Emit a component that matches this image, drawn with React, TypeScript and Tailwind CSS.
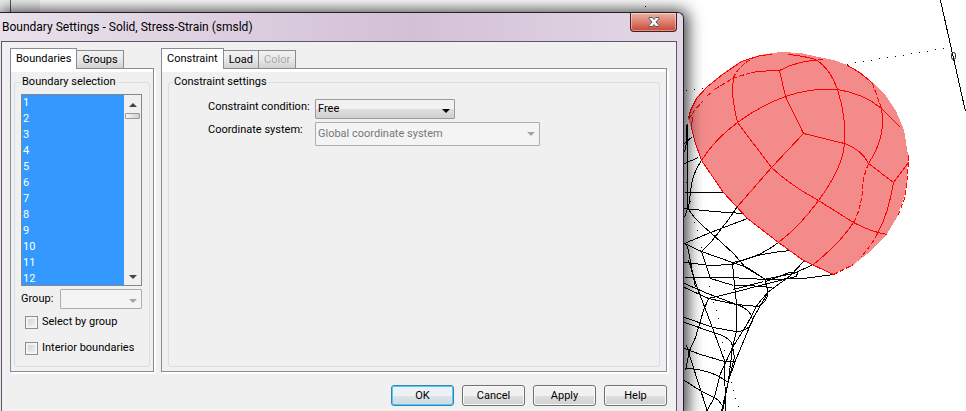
import type { ReactNode } from "react";

const dome =
  "M688 118 L690 110 L696 98 L706 87 L722 74 L741 61 L760 55 L780 52 L801 53 L818 57 L834 60 L847 65 L860 72 L872 82 L886 96 L896 111 L904 130 L908 155 L907 180 L904 198 L897 217 L887 234 L872 250 L853 265 L833 274 L803 260 L778 242 L747 218 L723 192 L701 160 L694 140 L691 127 Z";

const redLines = [
  "M688 118 L690 110 L696 98 L706 87 L722 74 L741 61 L760 55 L772 54",
  "M692 117 L691 127 L694 140 L701 160 L723 192 L747 218 L778 242 L803 260 L833 274",
  "M737 122 L771 167 Q790 185 818 200 L853 222 Q872 232 887 234",
  "M733 77 Q730 95 737 122",
  "M751 72 Q765 70 779 70 Q797 60 823 59",
  "M779 70 L785 96 L803 133 L771 167 L737 206",
  "M803 133 L844 143 Q861 149 868 163 L893 182 L908 162",
  "M701 160 Q714 139 737 122 Q760 105 785 96 Q811 87 837 89 Q863 93 881 108 L900 127",
  "M788 54 Q806 56 815 59 Q829 67 837 89 Q846 117 844 143 Q842 168 818 200 Q801 224 778 242",
  "M881 108 Q886 136 868 163",
  "M853 222 Q840 242 813 264",
  "M893 182 Q888 213 877 233",
  "M847 65 Q861 72 872 83",
];

const redDashes = [
  "M688 119 L694 110 L702 101 M707 95 L711 92 M714 89 L732 78 L751 72",
  "M750 59 Q738 66 733 77",
  "M872 83 L881 108",
  "M868 163 Q861 181 862 190 Q860 210 853 222",
  "M877 233 Q871 245 860 257 M833 274 L853 264",
  "M908 155 L907 180 L904 198 L897 217",
];

const mesh = [
  "M701 160 Q691 174 690 192 L688 208",
  "M687 123 L687 208 L684 217 M686 124 L686 142 L684 152",
  "M684 143 L692 136 M684 163 L698 157",
  "M684 192 H723",
  "M684 208 L713 211 L743 213",
  "M688 208 Q691 216 710 232 L733 253 L745 267 L765 279",
  "M747 218 L710 232 L684 243",
  "M737 206 L728 219 L711 241 L701 251",
  "M684 243 L701 251 L732 262 L747 267 L765 279",
  "M684 262 L710 265 L732 264 Q754 253 790 250",
  "M732 262 Q757 258 778 242",
  "M684 277 H730 L765 279 L803 278 L833 274",
  "M701 251 L705 263 L710 278 L733 285",
  "M732 263 L734 285 L736 303 V331 L732 346",
  "M803 261 L790 275 L767 292 L757 304 L747 323 L732 347 L720 373 L714 397 L706 411",
  "M813 264 L793 273 L763 279 M765 281 L789 272 L797 272 L796 276 L763 284 L733 292 L708 298",
  "M734 285 H748 L772 287",
  "M684 283 L707 293 L736 304 Q751 309 752 320 Q749 331 735 331 L713 327 L684 317",
  "M684 287 L708 298 L736 304 L758 306 Q769 299 767 290 L765 280",
  "M708 298 L703 310 L695 337 L689 350 L685 370",
  "M684 322 L713 332 Q731 337 732 346 L734 357 L728 380 L721 411",
  "M688 260 L697 288 L710 322 L724 360 L725 411",
  "M684 243 L687 246 L695 287",
  "M684 348 L700 354 L724 361 H734",
  "M684 368 Q709 368 728 382",
  "M684 380 L698 389 L717 399 L722 405",
  "M686 345 L697 380 L707 411",
  "M767 293 L753 317 L735 360 L728 380 L722 411",
  "M732 347 L728 380",
  "M733 289 L763 281",
];

const dots: [number, number][] = [
  [645, 6], [686, 90], [694, 89], [702, 88], [847, 64], [855, 62], [863, 61], [871, 60], [879, 58],
  [887, 57], [895, 56], [903, 55], [911, 53], [919, 52], [927, 51], [935, 49], [943, 48],
  [686, 182], [690, 201], [694, 222], [697, 230], [701, 247], [709, 286], [713, 302], [716, 310], [718, 318],
  [722, 342], [724, 350], [729, 366], [731, 382], [733, 390], [735, 398], [738, 406],
];

function Drawing() {
  return (
    <svg
      className="absolute left-0 top-0"
      width="966"
      height="411"
      viewBox="0 0 966 411"
      fill="none"
      shapeRendering="crispEdges"
      aria-hidden="true"
    >
      <rect width="40" height="14" fill="#f0f0f0" />
      <path d="M10.5 0V12" stroke="#555" />
      <path d={dome} fill="#f38b8b" />
      <g stroke="#000" transform="translate(.5 .5)">
        {mesh.map((d) => <path key={d} d={d} />)}
        <path d="M940 0 L965 111" />
      </g>
      <g stroke="#f00" transform="translate(.5 .5)">
        {redLines.map((d) => <path key={d} d={d} />)}
        {redDashes.map((d) => <path key={d} d={d} strokeDasharray="5 2" />)}
      </g>
      {dots.map(([x, y]) => <rect key={`${x}-${y}`} x={x} y={y} width="1" height="1" fill="#000" />)}
      <rect x="951.5" y="52.5" width="4" height="7" rx="2" stroke="#222" shapeRendering="auto" />
    </svg>
  );
}

function Tab({ children, active, disabled }: { children: ReactNode; active?: boolean; disabled?: boolean }) {
  return (
    <button
      type="button"
      role="tab"
      aria-selected={!!active}
      disabled={disabled}
      className={
        active
          ? "relative z-10 -mb-px h-[21px] border border-b-0 border-[#898c95] bg-white px-[5px]"
          : "-ml-px h-[18px] border border-b-0 border-[#898c95] bg-linear-to-b from-[#f2f2f2] via-[#e8e8e8] to-[#d2d2d2] px-[5px] disabled:text-[#a8a8a8]"
      }
    >
      {children}
    </button>
  );
}

function Panel({ children }: { children: ReactNode }) {
  return (
    <div className="flex flex-1 flex-col border border-[#898c95] px-[3px] pb-1 pt-[5px] shadow-[inset_0_3px_0_#fff,2px_2px_0_#fff]">
      {children}
    </div>
  );
}

function Arrow({ className }: { className: string }) {
  return (
    <svg className={className} width="8" height="4" viewBox="0 0 8 4" fill="currentColor" aria-hidden="true">
      <path d="M0 0H8L4 4Z" />
    </svg>
  );
}

function PushButton({ children, primary }: { children: ReactNode; primary?: boolean }) {
  return (
    <button
      type="button"
      className={
        primary
          ? "h-[21px] w-[63px] rounded-[3px] border border-[#3c7fb1] bg-linear-to-b from-[#edf1f3] from-50% via-[#dce4e8] via-50% to-[#cbdbe2] shadow-[inset_0_0_0_1px_#45d0f5]"
          : "h-[21px] w-[63px] rounded-[3px] border border-[#707070] bg-linear-to-b from-[#f1f1f1] from-50% via-[#dfdfdf] via-50% to-[#d0d0d0] shadow-[inset_0_0_0_1px_#fafafa]"
      }
    >
      {children}
    </button>
  );
}

function Check({ id, label }: { id: string; label: string }) {
  return (
    <div className="flex items-center gap-1">
      <input
        id={id}
        type="checkbox"
        className="size-[13px] appearance-none border border-[#8e8f8f] bg-linear-to-br from-[#cbcfd5] to-[#f6f6f6] shadow-[inset_0_0_0_2px_#f4f4f4]"
      />
      <label htmlFor={id}>{label}</label>
    </div>
  );
}

const boundaries = Array.from({ length: 14 }, (_, i) => String(i + 1));

export default function App() {
  return (
    <main className="relative min-h-screen overflow-hidden bg-white pt-3 font-['Roboto','DejaVu_Sans',sans-serif] text-[11px] leading-4 text-black">
      <Drawing />
      <section
        role="dialog"
        aria-labelledby="title"
        className="relative flex min-h-[calc(100vh-12px)] w-[684px] flex-col rounded-tr-md border-r border-t border-[#222] bg-linear-to-r from-[#e9e1eb] via-[#d3c0d6] via-60% to-[#e4d8e6] pl-px pr-1.5 shadow-[2px_0_16px_2px_rgba(0,0,0,0.75)]"
      >
        <header className="flex h-7 items-start justify-between">
          <h1 id="title" className="pl-px pt-1.5 text-[12px] leading-4">
            Boundary Settings - Solid, Stress-Strain (smsld)
          </h1>
          <button
            type="button"
            aria-label="Close"
            className="flex h-[19px] w-[47px] items-center justify-center rounded-b-[4px] border border-t-0 border-[#4d1c20] bg-linear-to-b from-[#eeb0a5] from-0% via-[#dd8475] via-45% to-[#c8452f] shadow-[inset_0_0_0_1px_rgba(255,255,255,0.4)]"
          >
            <svg width="12" height="10" viewBox="0 0 12 10" aria-hidden="true">
              <path
                d="M1 .5H4.3L6 2.5 7.7.5H11V1.5L8 5 11 8.5V9.5H7.7L6 7.5 4.3 9.5H1V8.5L4 5 1 1.5Z"
                fill="#fff"
                stroke="#53586b"
              />
            </svg>
          </button>
        </header>

        <div className="flex flex-1 flex-col border border-b-0 border-[#5f5566] bg-[#f0f0f0] pl-2 pr-[9px] pt-1.5">
          <div className="flex h-[324px] gap-[7px]">
            <div className="flex w-36 shrink-0 flex-col">
              <div role="tablist" className="flex items-end">
                <Tab active>Boundaries</Tab>
                <Tab>Groups</Tab>
              </div>
              <Panel>
                <fieldset className="flex-1 rounded-[3px] border border-[#d5dfe5] pl-1.5 pr-[7px]">
                  <legend className="px-px">Boundary selection</legend>
                  <div className="mt-1 flex h-[192px] border border-[#828790]">
                    <select
                      multiple
                      aria-label="Boundary selection"
                      defaultValue={boundaries}
                      className="min-w-0 flex-1 appearance-none overflow-hidden bg-[#3399ff] pt-px [scrollbar-width:none]"
                    >
                      {boundaries.map((n) => (
                        <option
                          key={n}
                          value={n}
                          className="h-4 min-h-0 bg-[linear-gradient(#3399ff,#3399ff)] p-0 px-px leading-4 text-white [-webkit-text-fill-color:white]"
                        >
                          {n}
                        </option>
                      ))}
                    </select>
                    <div className="flex w-[17px] flex-col items-center bg-[#f0f0f0] pb-1.5 pt-2">
                      <Arrow className="rotate-180 text-[#444]" />
                      <div className="mt-1.5 h-1.5 w-[15px] rounded-[1px] border border-[#979797] bg-linear-to-r from-[#f5f5f5] to-[#cfcfcf]" />
                      <Arrow className="mt-auto text-[#444]" />
                    </div>
                  </div>
                  <div className="mt-[3px] flex items-center justify-between">
                    <label htmlFor="group">Group:</label>
                    <div className="relative">
                      <select
                        id="group"
                        disabled
                        className="block h-5 w-[82px] appearance-none rounded-[1px] border border-[#adadad] bg-[#f4f4f4]"
                      />
                      <Arrow className="absolute right-[5px] top-2.5 text-[#a5a5a5]" />
                    </div>
                  </div>
                  <div className="mt-[5px] flex flex-col gap-2.5 pl-1">
                    <Check id="by-group" label="Select by group" />
                    <Check id="interior" label="Interior boundaries" />
                  </div>
                </fieldset>
              </Panel>
            </div>

            <div className="flex min-w-0 flex-1 flex-col">
              <div role="tablist" className="flex items-end">
                <Tab active>Constraint</Tab>
                <Tab>Load</Tab>
                <Tab disabled>Color</Tab>
              </div>
              <Panel>
                <fieldset className="mx-[3px] flex-1 rounded-[3px] border border-[#d5dfe5] px-1">
                  <legend className="px-px">Constraint settings</legend>
                  <div className="grid grid-cols-[107px_1fr] gap-y-[3px] pl-[35px] pt-[9px]">
                    <label htmlFor="condition">Constraint condition:</label>
                    <div className="relative w-[140px]">
                      <select
                        id="condition"
                        className="block h-5 w-full appearance-none rounded-[1px] border border-[#9a9a9a] bg-linear-to-b from-[#f1f1f1] from-50% via-[#dfdfdf] via-50% to-[#d0d0d0] pl-0.5"
                      >
                        <option>Free</option>
                      </select>
                      <Arrow className="pointer-events-none absolute right-[5px] top-2.5" />
                    </div>
                    <label htmlFor="system">Coordinate system:</label>
                    <div className="relative w-[225px]">
                      <select
                        id="system"
                        disabled
                        className="block h-6 w-full appearance-none rounded-[1px] border border-[#adadad] bg-[#f4f4f4] pl-0.5 text-[#777] opacity-100"
                      >
                        <option>Global coordinate system</option>
                      </select>
                      <Arrow className="absolute right-[5px] top-2.5 text-[#a5a5a5]" />
                    </div>
                  </div>
                </fieldset>
              </Panel>
            </div>
          </div>

          <footer className="flex justify-end gap-2 pb-3 pt-[13px]">
            <PushButton primary>OK</PushButton>
            <PushButton>Cancel</PushButton>
            <PushButton>Apply</PushButton>
            <PushButton>Help</PushButton>
          </footer>
        </div>
      </section>
    </main>
  );
}
